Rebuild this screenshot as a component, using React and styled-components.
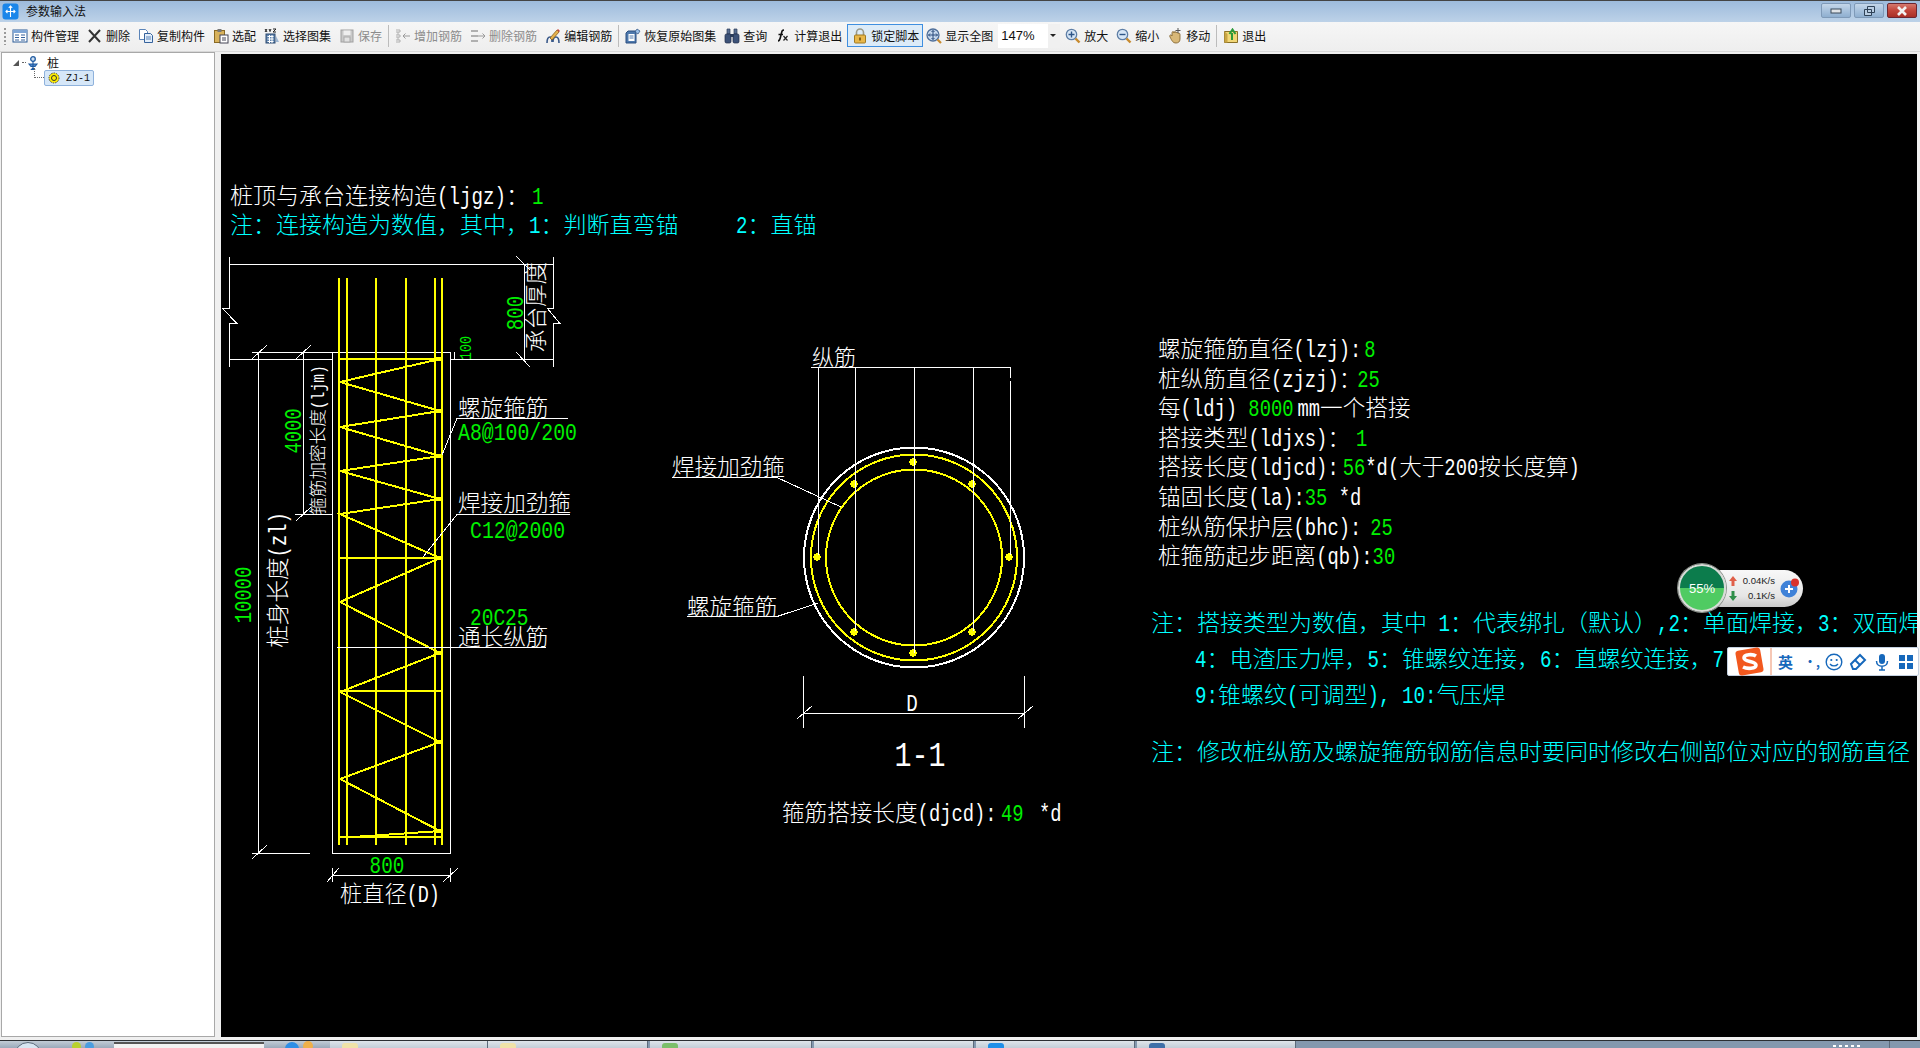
import React from "react";
import styled, { createGlobalStyle } from "styled-components";

const CJK = '"Noto Sans CJK SC", "Liberation Sans", sans-serif';
const MONO = '"Liberation Mono", "Noto Sans CJK SC", monospace';

const GlobalStyle = createGlobalStyle`
  html, body { margin: 0; padding: 0; background: #f0f0f0; overflow: hidden; }
  body { font-family: ${CJK}; font-size: 12px; color: #111; }
`;

const Page = styled.div`
  position: relative;
  width: 1920px;
  height: 1048px;
  display: flex;
  flex-direction: column;
  overflow: hidden;
`;

/* title bar */
const TitleBar = styled.div`
  height: 21px;
  flex: none;
  display: flex;
  align-items: center;
  padding-left: 2px;
  border-top: 1px solid #444;
  background: linear-gradient(#9dbbdc, #bdd2e8);
`;
const AppIcon = styled.svg`
  width: 17px;
  height: 17px;
  flex: none;
`;
const TitleText = styled.span`
  margin-left: 7px;
  margin-bottom: 2px;
  font-size: 12px;
  line-height: 19px;
  color: #111;
`;
const WinButtons = styled.div`
  margin-left: auto;
  margin-right: 3px;
  display: flex;
  gap: 3px;
  align-self: flex-start;
  margin-top: 2px;
`;
const WinButton = styled.div`
  width: 30px;
  height: 15px;
  box-sizing: border-box;
  border: 1px solid ${(p) => (p.$close ? "#6d2630" : "#7f9ab8")};
  border-radius: 2px;
  display: flex;
  align-items: center;
  justify-content: center;
  background: ${(p) =>
    p.$close
      ? "linear-gradient(#d4796e 0%, #c2453a 50%, #a92f26 100%)"
      : "linear-gradient(#c4d6e9 0%, #a8c2dd 50%, #8fafd0 100%)"};
`;

/* toolbar */
const Toolbar = styled.div`
  height: 30px;
  flex: none;
  box-sizing: border-box;
  display: flex;
  align-items: center;
  gap: 8px;
  padding: 0 0 2px 12px;
  position: relative;
  background: linear-gradient(#f6f6f6, #eeeeee);
  border-bottom: 1px solid #d8d8d8;
`;
const Grip = styled.div`
  position: absolute;
  left: 4px;
  top: 6px;
  width: 2px;
  height: 17px;
  background: repeating-linear-gradient(#9a9a9a 0 2px, transparent 2px 4px);
`;
const ToolItem = styled.div`
  display: flex;
  align-items: center;
  gap: 3px;
  white-space: nowrap;
  font-size: 12px;
  line-height: 22px;
  color: ${(p) => (p.$disabled ? "#8c8c8c" : "#111")};
  ${(p) =>
    p.$active &&
    `
    height: 23px;
    box-sizing: border-box;
    margin: 0 -5px 0 -3px;
    padding: 0 3px 0 4px;
    border: 1px solid #3f8fe0;
    background: #dcebf8;
  `}
  svg {
    width: 16px;
    height: 16px;
    flex: none;
  }
`;
const ToolSep = styled.div`
  width: 1px;
  height: 22px;
  margin: 0 -2px;
  background: #bcbcbc;
`;
const Combo = styled.div`
  width: 62px;
  height: 24px;
  margin: 0 -3px;
  box-sizing: border-box;
  padding: 0 3px;
  display: flex;
  align-items: center;
  justify-content: space-between;
  background: linear-gradient(90deg, #fff 0 50px, #f0f0f0 50px);
  font-family: "Liberation Sans", sans-serif;
  font-size: 13px;
`;
const ComboArrow = styled.i`
  width: 0;
  height: 0;
  margin-right: 1px;
  border-left: 3px solid transparent;
  border-right: 3px solid transparent;
  border-top: 3px solid #222;
`;

/* main area */
const Body = styled.div`
  flex: 1;
  min-height: 0;
  display: flex;
  box-sizing: border-box;
  padding: 2px 3px 3px 1px;
  background: #f0f0f0;
`;
const TreePanel = styled.div`
  width: 214px;
  flex: none;
  margin-top: -2px;
  box-sizing: border-box;
  border: 1px solid #a8a8a8;
  background: #fff;
  padding-top: 2px;
`;
const TreeRow = styled.div`
  display: flex;
  align-items: center;
  height: ${(p) => (p.$leaf ? "16px" : "15px")};
  margin-left: ${(p) => p.$indent}px;
`;
const Expander = styled.i`
  width: 0;
  height: 0;
  margin-right: 3px;
  border-left: 6px solid transparent;
  border-bottom: 6px solid #555;
`;
const DotLine = styled.i`
  width: ${(p) => p.$w}px;
  height: 1px;
  border-top: 1px dotted #666;
`;
const Connector = styled.i`
  width: 10px;
  height: 10px;
  margin-top: -10px;
  box-sizing: border-box;
  border-left: 1px dotted #666;
  border-bottom: 1px dotted #666;
`;
const TreeLabel = styled.span`
  margin-left: 7px;
  font-size: 12px;
  color: #111;
`;
const TreeSelected = styled.div`
  width: 50px;
  height: 16px;
  box-sizing: border-box;
  display: flex;
  align-items: center;
  gap: 6px;
  padding-left: 3px;
  border: 1px solid #8fb2dc;
  border-radius: 2px;
  background: #d6e7f8;
  font-family: ${MONO};
  font-size: 10px;
  color: #111;
`;
const Canvas = styled.div`
  position: relative;
  margin-left: 6px;
  flex: 1;
  background: #000;
  overflow: hidden;
  font-family: ${CJK};
  font-weight: 300;
`;
const CadSheet = styled.svg`
  display: block;
  width: 1696px;
  height: 983px;
`;
const CadText = styled.text`
  font-family: ${CJK};
  font-weight: 300;
  white-space: pre;
`;
const CadLatin = styled.text`
  font-family: ${MONO};
  white-space: pre;
`;
const TextBlock = styled.div`
  position: absolute;
  left: ${(p) => p.$x}px;
  top: ${(p) => p.$y}px;
  font-size: ${(p) => p.$size}px;
  line-height: ${(p) => p.$line}px;
  color: ${(p) => p.$color};
  white-space: pre;
  & > div {
    height: ${(p) => p.$line}px;
  }
`;
const Line = styled.div`
  padding-left: ${(p) => p.$indent || 0}px;
  margin-top: ${(p) => p.$gap || 0}px;
  color: ${(p) => p.$color || "inherit"};
`;
const Latin = styled.span`
  display: inline-block;
  font-family: ${MONO};
  font-weight: 400;
  font-size: 0.833em;
  line-height: 1;
  transform: scaleY(1.25);
  transform-origin: 50% 76.5%;
`;
const Val = styled(Latin)`
  color: #00f000;
  margin-left: ${(p) => p.$ml || 0}px;
  margin-right: ${(p) => p.$mr || 0}px;
`;

/* floating desktop widgets */
const NetMeter = styled.div`
  position: absolute;
  left: 1678px;
  top: 564px;
  width: 125px;
  height: 48px;
`;
const MeterPill = styled.div`
  position: absolute;
  left: 24px;
  top: 6px;
  width: 101px;
  height: 37px;
  border-radius: 19px;
  background: linear-gradient(#f8f8f8, #e6e6e6 70%, #c9c9c9);
`;
const MeterBall = styled.div`
  position: absolute;
  left: 0;
  top: 0;
  width: 48px;
  height: 48px;
  box-sizing: border-box;
  border-radius: 50%;
  border: 2px solid #d8dcd8;
  box-shadow: 0 0 0 1px #8d938d;
  background: linear-gradient(#0c7c4c 0 50%, #4fcb62 50%);
  display: flex;
  align-items: center;
  justify-content: center;
  color: #fff;
  font-family: "Liberation Sans", sans-serif;
  font-size: 13px;
`;
const Speed = styled.div`
  position: absolute;
  right: 28px;
  top: ${(p) => p.$y}px;
  font-family: "Liberation Sans", sans-serif;
  font-size: 9.5px;
  line-height: 12px;
  color: #222;
`;
const SpeedArrow = styled.svg`
  position: absolute;
  left: 51px;
  top: ${(p) => p.$y}px;
  width: 8px;
  height: 10px;
`;
const MeterPlus = styled.svg`
  position: absolute;
  left: 100px;
  top: 12px;
  width: 24px;
  height: 24px;
`;
const ImeBar = styled.div`
  position: absolute;
  left: 1727px;
  top: 647px;
  width: 192px;
  height: 29px;
  box-sizing: border-box;
  display: flex;
  align-items: center;
  padding-left: 6px;
  background: #fff;
  border: 1px solid #c3d0e0;
  border-radius: 2px;
  color: #1668bb;
`;
const ImeLogo = styled.svg`
  width: 31px;
  height: 29px;
  flex: none;
`;
const ImeDivider = styled.i`
  width: 3px;
  height: 27px;
  margin: 0 6px 0 5px;
  border-left: 1px solid #f6c7b5;
  border-right: 1px solid #f6c7b5;
`;
const ImeText = styled.span`
  width: ${(p) => p.$w}px;
  font-size: ${(p) => p.$size}px;
  font-weight: 700;
  line-height: 27px;
  flex: none;
`;
const ImeIcon = styled.svg`
  width: 18px;
  height: 18px;
  flex: none;
  margin-right: 6px;
`;

/* taskbar */
const Taskbar = styled.div`
  height: 7px;
  flex: none;
  display: flex;
  background: #8498ae;
  border-top: 1px solid #2c2f33;
  position: relative;
`;
const QuickArea = styled.div`
  width: 330px;
  flex: none;
  position: relative;
  background: linear-gradient(#c2ccd6, #9aa9ba);
`;
const Orb = styled.i`
  position: absolute;
  left: ${(p) => p.$x}px;
  top: ${(p) => p.$y || 0}px;
  width: ${(p) => p.$s}px;
  height: ${(p) => p.$s}px;
  border-radius: 50%;
  background: ${(p) => p.$c};
  border: ${(p) => p.$b || "none"};
`;
const SearchStub = styled.i`
  position: absolute;
  left: 114px;
  top: 1px;
  width: 150px;
  height: 6px;
  background: #f2f2f2;
  border-top: 2px solid #555;
`;
const TaskButton = styled.div`
  width: ${(p) => p.$w}px;
  flex: none;
  box-sizing: border-box;
  position: relative;
  margin-right: ${(p) => p.$mr || 0}px;
  background: linear-gradient(#dfe5ea, #c3cdd8);
  border-right: 1px solid #5b6a7a;
`;
const TaskGlyph = styled.i`
  position: absolute;
  left: 12px;
  top: 2px;
  width: 16px;
  height: 5px;
  border-radius: 3px 3px 0 0;
  background: ${(p) => p.$c};
`;
const TrayMarks = styled.i`
  position: absolute;
  left: 1833px;
  top: 4px;
  width: 29px;
  height: 2px;
  background: repeating-linear-gradient(90deg, #fff 0 3px, transparent 3px 6px);
`;
const TrayEdge = styled.i`
  position: absolute;
  left: 1889px;
  top: 0;
  width: 1px;
  height: 7px;
  background: #5b6a7a;
`;

const splitRuns = (s) => s.split(/([\x00-\x7f]+)/).filter(Boolean);
const isLatin = (s) => /^[\x00-\x7f]+$/.test(s);

const Mix = ({ children }) =>
  splitRuns(children).map((r, i) => (isLatin(r) ? <Latin key={i}>{r}</Latin> : r));

// Latin runs are half a cell wide and stretched up like the CAD font
const Label = ({ x, y, size = 22.6, color = "#fff", rot = 0, anchor = "start", children }) => {
  const runs = splitRuns(children);
  const widthOf = (r) => (isLatin(r) ? (r.length * size) / 2 : r.length * size);
  const total = runs.reduce((sum, r) => sum + widthOf(r), 0);
  let cx = anchor === "middle" ? -total / 2 : 0;
  return (
    <g transform={`translate(${x} ${y}) rotate(${rot})`} shapeRendering="auto">
      {runs.map((r, i) => {
        const at = cx;
        cx += widthOf(r);
        return isLatin(r) ? (
          <g key={i} transform={`translate(${at} ${size * 0.36}) scale(1 1.25)`}>
            <CadLatin fontSize={size * 0.833} fill={color}>
              {r}
            </CadLatin>
          </g>
        ) : (
          <CadText key={i} x={at} y={size * 0.36} fontSize={size} fill={color}>
            {r}
          </CadText>
        );
      })}
    </g>
  );
};

const Seg = ({ pts, c = "#fff", w = 1 }) => (
  <polyline points={pts} fill="none" stroke={c} strokeWidth={w} />
);

const GREEN = "#00f000";
const YEL = "#ffff00";
const REBAR_X = [339, 347, 376, 406, 435, 442];
const HOOPS = [359, 558, 691, 837];
const ZIG =
  "440,359 340,382 440,411 340,427 440,456 340,471 440,499 340,514 440,558 340,602 440,653 340,692 440,742 340,779 440,831 353,837";
const ZIG_KNOTS = [359, 411, 456, 499, 558, 653, 742, 831];
const BARS = [
  [913, 462],
  [854, 484],
  [972, 484],
  [817, 557],
  [1009, 557],
  [854, 632],
  [972, 632],
  [913, 653],
];

const PileDrawing = () => (
  <g>
    {/* cap outline */}
    <Seg pts="229.5,257 229.5,308 222,308 237,323.5 229.5,323.5 229.5,367" />
    <Seg pts="553.5,257 553.5,308 547,308 560,323.5 553.5,323.5 553.5,367" />
    <Seg pts="229,264.5 553,264.5" />
    <Seg pts="229,359.5 333,359.5" />
    <Seg pts="451,359.5 553,359.5" />
    <Seg pts="524.5,264 524.5,359" />
    <Seg pts="516,256 530,270" />
    <Seg pts="516,352 530,367" />
    {/* pile box */}
    <Seg pts="332.5,352.5 450.5,352.5 450.5,853.5 332.5,853.5 332.5,352.5" />
    <Seg pts="454.5,352 454.5,359 451,359" />
    {/* rebar */}
    {REBAR_X.map((x) => (
      <Seg key={x} pts={`${x},278 ${x},845`} c={YEL} w={2} />
    ))}
    {HOOPS.map((y) => (
      <Seg key={y} pts={`339,${y} 442,${y}`} c={YEL} w={2} />
    ))}
    <Seg pts={ZIG} c={YEL} w={2} />
    {ZIG_KNOTS.map((y) => (
      <rect key={y} x="436" y={y - 2} width="5" height="4" fill={YEL} />
    ))}
    {/* side dimensions */}
    <Seg pts="252,352.5 333,352.5" />
    <Seg pts="258.5,352 258.5,853" />
    <Seg pts="303.5,352 303.5,514" />
    <Seg pts="252,359 267,345" />
    <Seg pts="296,359 311,345" />
    <Seg pts="295,514.5 333,514.5" />
    <Seg pts="296,521 311,507" />
    <Seg pts="252,853.5 310,853.5" />
    <Seg pts="252,859 267,845" />
    {/* bottom dimension */}
    <Seg pts="332.5,875.5 450.5,875.5" />
    <Seg pts="332.5,868 332.5,882" />
    <Seg pts="450.5,868 450.5,882" />
    <Seg pts="327,882 339,868" />
    <Seg pts="443,882 458,868" />
    {/* leaders */}
    <Seg pts="568,418.5 457,418.5 442,455" />
    <Seg pts="570,514.5 457,514.5 423,557" />
    <Seg pts="337,647.5 546,647.5" />

    <Label x={515} y={313} size={23} color={GREEN} rot={-90} anchor="middle">800</Label>
    <Label x={536} y={307} size={22.6} rot={-90} anchor="middle">承台厚度</Label>
    <Label x={465} y={348} size={16} color={GREEN} rot={-90} anchor="middle">100</Label>
    <Label x={293} y={431} size={22.6} color={GREEN} rot={-90} anchor="middle">4000</Label>
    <Label x={318} y={440} size={17.6} rot={-90} anchor="middle">箍筋加密长度(ljm)</Label>
    <Label x={243} y={595} size={22.6} color={GREEN} rot={-90} anchor="middle">10000</Label>
    <Label x={278} y={580} size={22.6} rot={-90} anchor="middle">桩身长度(zl)</Label>
    <Label x={458} y={408}>螺旋箍筋</Label>
    <Label x={458} y={431} size={23.8} color={GREEN}>A8@100/200</Label>
    <Label x={458} y={503}>焊接加劲箍</Label>
    <Label x={470} y={529} size={23.8} color={GREEN}>C12@2000</Label>
    <Label x={470} y={617} size={23.4} color={GREEN}>20C25</Label>
    <Label x={458} y={637}>通长纵筋</Label>
    <Label x={387} y={865} size={23.2} color={GREEN} anchor="middle">800</Label>
    <Label x={390} y={894} size={22.2} anchor="middle">桩直径(D)</Label>
  </g>
);

const SectionDrawing = () => (
  <g>
    <circle cx="914" cy="557.5" r="110" fill="none" stroke="#fff" strokeWidth="2" />
    <circle cx="914" cy="557.5" r="103" fill="none" stroke={YEL} strokeWidth="2" />
    <circle cx="914" cy="557.5" r="88" fill="none" stroke={YEL} strokeWidth="2" />
    {BARS.map(([x, y]) => (
      <circle key={`${x}-${y}`} cx={x} cy={y} r="3.6" fill={YEL} />
    ))}
    <Seg pts="811,367.5 1010.5,367.5" />
    <Seg pts="818.5,367 818.5,555" />
    <Seg pts="855.5,367 855.5,631" />
    <Seg pts="914.5,367 914.5,653" />
    <Seg pts="973.5,367 973.5,631" />
    <Seg pts="1010.5,367 1010.5,378" />
    <Seg pts="1010.5,381 1010.5,555" />
    <Seg pts="672,477.5 777,477.5 841,507" />
    <Seg pts="687,616.5 777,616.5 818,603" />
    <Seg pts="803.5,676 803.5,728" />
    <Seg pts="1024.5,676 1024.5,728" />
    <Seg pts="803,713.5 1024,713.5" />
    <Seg pts="797,719 812,706" />
    <Seg pts="1018,719 1033,706" />
    <Label x={812} y={357} size={22}>纵筋</Label>
    <Label x={672} y={467}>焊接加劲箍</Label>
    <Label x={687} y={607}>螺旋箍筋</Label>
    <Label x={912} y={703} size={23} anchor="middle">D</Label>
    <Label x={920} y={754} size={34} anchor="middle">1-1</Label>
  </g>
);

const StirrupNote = () => (
  <g>
    <Label x={782} y={813}>箍筋搭接长度(djcd):</Label>
    <Label x={1001} y={813} color={GREEN}>49</Label>
    <Label x={1039} y={813}>*d</Label>
  </g>
);

/* toolbar icons */
const MagBase = ({ children }) => (
  <svg viewBox="0 0 16 16">
    <circle cx="6.5" cy="6.5" r="5.2" fill="#d7e6f6" stroke="#5f7fa6" strokeWidth="1.3" />
    {children}
    <path d="M10.5 10.5 L14.5 14.5" stroke="#c88a2e" strokeWidth="2.4" />
  </svg>
);
const Icons = {
  manage: (
    <svg viewBox="0 0 16 16">
      <rect x="1" y="2" width="14" height="12" fill="#fff" stroke="#2a5a96" />
      <rect x="1" y="2" width="14" height="3" fill="#7fa6d6" />
      <path d="M3 7h4M3 9.5h4M3 12h4M9 7h4M9 9.5h4M9 12h4" stroke="#34619c" />
    </svg>
  ),
  del: (
    <svg viewBox="0 0 16 16">
      <path d="M2 2 L13 14 M13 2 L2 14" stroke="#333" strokeWidth="2" />
    </svg>
  ),
  copy: (
    <svg viewBox="0 0 16 16">
      <path d="M1.5 1.5h6l2 2v8h-8z" fill="#fff" stroke="#5b84b8" />
      <path d="M6.5 5.5h6l2 2v7h-8z" fill="#e3eefa" stroke="#35629c" />
      <path d="M8 9h5M8 11h5" stroke="#5b84b8" />
    </svg>
  ),
  pick: (
    <svg viewBox="0 0 16 16">
      <rect x="1.5" y="2.5" width="10" height="12" fill="#d8b25c" stroke="#8a6a24" />
      <rect x="4.5" y="1" width="4" height="3" fill="#777" />
      <rect x="7" y="7" width="8" height="8" fill="#fff" stroke="#445" />
      <path d="M9 10h4M9 12h4" stroke="#445" />
    </svg>
  ),
  atlas: (
    <svg viewBox="0 0 16 16">
      <path d="M1 1l2 3m0-3L1 4M5 1l1 2 1-2M6 3v1M9 1h3l-3 3h3" stroke="#222" fill="none" />
      <rect x="2" y="6" width="9" height="9" fill="#5f83ad" stroke="#2c4a70" />
      <path d="M3.5 8.5h6M3.5 11h6M3.5 13.5h6M5.5 7v8M8 7v8" stroke="#fff" />
      <path d="M12 8l3 6h-3z" fill="#9db6d2" />
    </svg>
  ),
  save: (
    <svg viewBox="0 0 16 16">
      <rect x="2" y="2" width="12" height="12" fill="#c9c9c9" stroke="#a0a0a0" />
      <rect x="4.5" y="2.5" width="7" height="4.5" fill="#eee" />
      <rect x="5" y="9" width="6" height="5" fill="#e2e2e2" stroke="#aaa" />
    </svg>
  ),
  addBar: (
    <svg viewBox="0 0 16 16">
      <path d="M1 2h4v2H1M1 7h4v2H1M1 12h4v2H1M3 4v3M3 9v3" fill="none" stroke="#b0b0b0" />
      <path d="M15 8H8M10.5 5.5L8 8l2.5 2.5" fill="none" stroke="#9a9a9a" />
    </svg>
  ),
  delBar: (
    <svg viewBox="0 0 16 16">
      <path d="M1 3h7M1 8h7M1 13h7" stroke="#b0b0b0" strokeWidth="2" />
      <path d="M8 8h7M12.5 5.5L15 8l-2.5 2.5" fill="none" stroke="#9a9a9a" />
    </svg>
  ),
  edit: (
    <svg viewBox="0 0 16 16">
      <path d="M2 15c0-4 1-6 3-6s2 3 2 5M8 14c0-3 1-5 3-5s3 2 3 6" fill="none" stroke="#39598a" strokeWidth="1.6" />
      <path d="M5 10L12 2l2 2-7 8z" fill="#e7b24c" stroke="#8a5f1c" strokeWidth=".8" />
      <path d="M12 2l2 2 1-1-2-2z" fill="#c7463c" />
    </svg>
  ),
  restore: (
    <svg viewBox="0 0 16 16">
      <path d="M3 3h8v12H1V5z" fill="#4e79ad" stroke="#2a4f80" />
      <rect x="3.5" y="6" width="6" height="7" fill="#fff" />
      <path d="M4.5 8h4M4.5 10h4" stroke="#4e79ad" />
      <path d="M10 4l2-3 3 2-2 3z" fill="#9cc1ea" stroke="#2a4f80" strokeWidth=".7" />
    </svg>
  ),
  find: (
    <svg viewBox="0 0 16 16">
      <path d="M3 1h3v5H3zM10 1h3v5h-3z" fill="#5a6f92" stroke="#2b3c5a" strokeWidth=".7" />
      <rect x="1" y="6" width="6" height="9" rx="1.5" fill="#3c5278" stroke="#1f2d47" strokeWidth=".7" />
      <rect x="9" y="6" width="6" height="9" rx="1.5" fill="#3c5278" stroke="#1f2d47" strokeWidth=".7" />
      <rect x="6" y="6" width="4" height="3" fill="#2b3c5a" />
    </svg>
  ),
  calc: (
    <svg viewBox="0 0 16 16">
      <path d="M3 13c2 0 2-2 3-6s1-5 3-5M3.5 6.5H8" fill="none" stroke="#111" strokeWidth="1.6" />
      <path d="M8.5 8l4 4.5M12.5 8l-4 4.5" stroke="#222" strokeWidth="1.2" />
    </svg>
  ),
  lock: (
    <svg viewBox="0 0 16 16">
      <path d="M4.5 7V4.5a3.5 3.5 0 0 1 7 0V7" fill="none" stroke="#9a9a8a" strokeWidth="1.6" />
      <rect x="2.5" y="7" width="11" height="8" rx="1" fill="#e8b74a" stroke="#a07a22" />
      <rect x="7.2" y="9.5" width="1.6" height="3" fill="#6d4c10" />
    </svg>
  ),
  fit: (
    <svg viewBox="0 0 16 16">
      <circle cx="7" cy="7" r="6" fill="#c7d9ee" stroke="#4f6f9a" strokeWidth="1.3" />
      <path d="M7 2.5v9M2.5 7h9M5.5 4L7 2.5 8.5 4M5.5 10L7 11.5 8.5 10M4 5.5L2.5 7 4 8.5M10 5.5L11.5 7 10 8.5" fill="none" stroke="#27497a" />
      <path d="M11.5 11.5L15 15" stroke="#c88a2e" strokeWidth="2.2" />
    </svg>
  ),
  zoomIn: (
    <MagBase>
      <path d="M3.5 6.5h6M6.5 3.5v6" stroke="#2f5688" strokeWidth="1.4" />
    </MagBase>
  ),
  zoomOut: (
    <MagBase>
      <path d="M3.5 6.5h6" stroke="#2f5688" strokeWidth="1.4" />
    </MagBase>
  ),
  move: (
    <svg viewBox="0 0 16 16">
      <path d="M3 9c-1-2 1-3 2-1V5c0-2 2-2 2 0 0-2 2-2 2 0 0-1 2-1 2 .5 1-1 2 0 2 1V11c0 3-2 4-4 4-3 0-4-2-6-6z" fill="#d8b878" stroke="#7b5d2a" strokeWidth=".8" />
      <path d="M11 0v5M8.5 2.5h5" stroke="#555" />
    </svg>
  ),
  exit: (
    <svg viewBox="0 0 16 16">
      <path d="M1.5 3.5h13v11h-13z" fill="#f2d777" stroke="#8a7028" />
      <path d="M1.5 3.5l3 2.5v8.5l-3 0z" fill="#c9a544" />
      <path d="M9 12V5M6.5 6L9.5 1.5 12.5 6" fill="none" stroke="#2d9a3a" strokeWidth="2" />
    </svg>
  ),
};

const TOOLS = [
  { icon: "manage", text: "构件管理" },
  { icon: "del", text: "删除" },
  { icon: "copy", text: "复制构件" },
  { icon: "pick", text: "选配" },
  { icon: "atlas", text: "选择图集" },
  { icon: "save", text: "保存", disabled: true },
  { sep: true },
  { icon: "addBar", text: "增加钢筋", disabled: true },
  { icon: "delBar", text: "删除钢筋", disabled: true },
  { icon: "edit", text: "编辑钢筋" },
  { sep: true },
  { icon: "restore", text: "恢复原始图集" },
  { icon: "find", text: "查询" },
  { icon: "calc", text: "计算退出" },
  { icon: "lock", text: "锁定脚本", active: true },
  { icon: "fit", text: "显示全图" },
  { combo: "147%" },
  { icon: "zoomIn", text: "放大" },
  { icon: "zoomOut", text: "缩小" },
  { icon: "move", text: "移动" },
  { sep: true },
  { icon: "exit", text: "退出" },
];

const PARAMS = [
  <><Mix>螺旋箍筋直径(lzj):</Mix><Val $ml={3}>8</Val></>,
  <><Mix>桩纵筋直径(zjzj)：</Mix><Val $ml={-4}>25</Val></>,
  <><Mix>每(ldj) </Mix><Val $mr={4}>8000</Val><Mix>mm一个搭接</Mix></>,
  <><Mix>搭接类型(ldjxs)：</Mix><Val $ml={6}>1</Val></>,
  <><Mix>搭接长度(ldjcd):</Mix><Val $ml={4}>56</Val><Mix>*d(大于200按长度算)</Mix></>,
  <><Mix>锚固长度(la):</Mix><Val>35</Val><Mix> *d</Mix></>,
  <><Mix>桩纵筋保护层(bhc):</Mix><Val $ml={9}>25</Val></>,
  <><Mix>桩箍筋起步距离(qb):</Mix><Val>30</Val></>,
];

const App = () => (
  <Page>
    <GlobalStyle />
    <TitleBar>
      <AppIcon viewBox="0 0 17 17">
        <rect x="0.5" y="0.5" width="16" height="16" rx="3" fill="#1a86ea" />
        <path d="M8.5 3v11M4 8.5h9M6.8 4.8L8.5 3l1.7 1.8M5.5 6.8L4 8.5l1.5 1.7M11.5 6.8L13 8.5l-1.5 1.7" fill="none" stroke="#fff" strokeWidth="1.1" />
      </AppIcon>
      <TitleText>参数输入法</TitleText>
      <WinButtons>
        <WinButton>
          <svg width="12" height="6"><rect x="1" y="1" width="10" height="4" fill="#dfe3e7" stroke="#3a4a5a" /></svg>
        </WinButton>
        <WinButton>
          <svg width="13" height="12"><path d="M4.5 1.5h7v6h-7zM1.5 4.5h7v6h-7z" fill="#b9cde2" stroke="#2f4257" /></svg>
        </WinButton>
        <WinButton $close>
          <svg width="12" height="10"><path d="M2 1l8 8M10 1L2 9" stroke="#f2f2f2" strokeWidth="2.6" /></svg>
        </WinButton>
      </WinButtons>
    </TitleBar>

    <Toolbar>
      <Grip />
      {TOOLS.map((t, i) => {
        if (t.sep) return <ToolSep key={i} />;
        if (t.combo)
          return (
            <Combo key={i}>
              {t.combo}
              <ComboArrow />
            </Combo>
          );
        return (
          <ToolItem key={i} $disabled={t.disabled} $active={t.active}>
            {Icons[t.icon]}
            {t.text}
          </ToolItem>
        );
      })}
    </Toolbar>

    <Body>
      <TreePanel>
        <TreeRow $indent={11}>
          <Expander />
          <DotLine $w={4} />
          <svg width="14" height="14" viewBox="0 0 14 14">
            <circle cx="7" cy="3" r="2.3" fill="#cfe0f3" stroke="#1f5aa0" strokeWidth="1.3" />
            <path d="M7 5v7M3 8h8l-2 2.5H5zM7 12l-1.5 1.5h3z" fill="#4f86c8" stroke="#1f5aa0" strokeWidth="1.1" />
          </svg>
          <TreeLabel>桩</TreeLabel>
        </TreeRow>
        <TreeRow $indent={32} $leaf>
          <Connector />
          <TreeSelected>
            <svg width="12" height="12" viewBox="0 0 12 12">
              <circle cx="6" cy="6" r="5" fill="#ffee00" stroke="#444" strokeWidth="1" strokeDasharray="1.5 1" />
              <circle cx="6" cy="6" r="2.5" fill="none" stroke="#333" />
            </svg>
            ZJ-1
          </TreeSelected>
        </TreeRow>
      </TreePanel>

      <Canvas>
        <CadSheet viewBox="221 54 1696 983" shapeRendering="crispEdges">
          <PileDrawing />
          <SectionDrawing />
          <StirrupNote />
        </CadSheet>

        <TextBlock $x={9} $y={125.5} $size={23} $line={29} $color="#fff">
          <Line><Mix>桩顶与承台连接构造(ljgz)：</Mix><Val $ml={3}>1</Val></Line>
          <Line $color="#00ffff"><Mix>注：连接构造为数值，其中，1：判断直弯锚     2：直锚</Mix></Line>
        </TextBlock>

        <TextBlock $x={937} $y={279} $size={22.6} $line={29.6} $color="#fff">
          {PARAMS.map((p, i) => (
            <Line key={i}>{p}</Line>
          ))}
        </TextBlock>

        <TextBlock $x={930} $y={548.5} $size={23} $line={36.3} $color="#00ffff">
          <Line><Mix>注：搭接类型为数值，其中 1：代表绑扎（默认）,2：单面焊接，3：双面焊</Mix></Line>
          <Line $indent={44}><Mix>4：电渣压力焊，5：锥螺纹连接，6：直螺纹连接，7</Mix></Line>
          <Line $indent={44}><Mix>9:锥螺纹(可调型), 10:气压焊</Mix></Line>
          <Line $gap={21}><Mix>注：修改桩纵筋及螺旋箍筋钢筋信息时要同时修改右侧部位对应的钢筋直径</Mix></Line>
        </TextBlock>
      </Canvas>
    </Body>

    <Taskbar>
      <QuickArea>
        <Orb $x={14} $y={1} $s={26} $c="#d9e6f2" $b="1px solid #5b6a7a" />
        <Orb $x={72} $y={1} $s={9} $c="#b9d12c" />
        <Orb $x={85} $y={1} $s={9} $c="#4a9de0" />
        <SearchStub />
        <Orb $x={285} $y={1} $s={14} $c="#2f8fe6" />
        <Orb $x={303} $y={0} $s={10} $c="#efb04a" />
      </QuickArea>
      <TaskButton $w={158}><TaskGlyph $c="#f0e2a8" /></TaskButton>
      <TaskButton $w={160} $mr={2}><TaskGlyph $c="#f0e2a8" /></TaskButton>
      <TaskButton $w={162} $mr={2}><TaskGlyph $c="#7cbf6a" /></TaskButton>
      <TaskButton $w={160} $mr={2}></TaskButton>
      <TaskButton $w={159} $mr={2}><TaskGlyph $c="#1f8fe8" /></TaskButton>
      <TaskButton $w={159}><TaskGlyph $c="#3f6fa8" /></TaskButton>
      <TrayMarks />
      <TrayEdge />
    </Taskbar>

    <NetMeter>
      <MeterPill />
      <MeterBall>55%</MeterBall>
      <SpeedArrow $y={12} viewBox="0 0 8 10"><path d="M4 0L8 5H5.5v5h-3V5H0z" fill="#e0604a" /></SpeedArrow>
      <Speed $y={11}>0.04K/s</Speed>
      <SpeedArrow $y={27} viewBox="0 0 8 10"><path d="M4 10L8 5H5.5V0h-3v5H0z" fill="#2f8f4a" /></SpeedArrow>
      <Speed $y={26}>0.1K/s</Speed>
      <MeterPlus viewBox="0 0 24 24">
        <circle cx="11" cy="13" r="8.5" fill="#3f82d8" />
        <path d="M11 9v8M7 13h8" stroke="#fff" strokeWidth="2" />
        <circle cx="17" cy="6.5" r="4" fill="#d8322c" />
      </MeterPlus>
    </NetMeter>

    <ImeBar>
      <ImeLogo viewBox="0 0 31 29">
        <rect x="3" y="2" width="25" height="25" rx="3" fill="#f2581e" transform="rotate(-10 15.5 14.5)" />
        <path d="M22 9c-3-2-12-2-12 2s12 3 12 7-9 4-13 2" fill="none" stroke="#fff" strokeWidth="3.6" />
      </ImeLogo>
      <ImeDivider />
      <ImeText $w={26} $size={15}>英</ImeText>
      <ImeText $w={21} $size={12}>•,</ImeText>
      <ImeIcon viewBox="0 0 18 18">
        <circle cx="9" cy="9" r="7.8" fill="none" stroke="#1668bb" strokeWidth="1.4" />
        <circle cx="6.3" cy="7" r="1.1" fill="#1668bb" />
        <circle cx="11.7" cy="7" r="1.1" fill="#1668bb" />
        <path d="M5 11c2 2.6 6 2.6 8 0" fill="none" stroke="#1668bb" strokeWidth="1.3" />
      </ImeIcon>
      <ImeIcon viewBox="0 0 18 18">
        <path d="M2 11L11 2l5 5-9 9H4z" fill="none" stroke="#1668bb" strokeWidth="2" />
        <path d="M6 7l5 5" stroke="#1668bb" strokeWidth="2" />
      </ImeIcon>
      <ImeIcon viewBox="0 0 18 18">
        <rect x="6" y="1" width="6" height="10" rx="3" fill="#1668bb" />
        <path d="M3.5 8c0 7 11 7 11 0M9 13v4M6 17h6" fill="none" stroke="#1668bb" strokeWidth="1.5" />
      </ImeIcon>
      <ImeIcon viewBox="0 0 18 18">
        <path d="M2 2h6v6H2zM10 2h6v6h-6zM2 10h6v6H2zM10 10h6v6h-6z" fill="#1668bb" />
      </ImeIcon>
    </ImeBar>
  </Page>
);

export default App;
